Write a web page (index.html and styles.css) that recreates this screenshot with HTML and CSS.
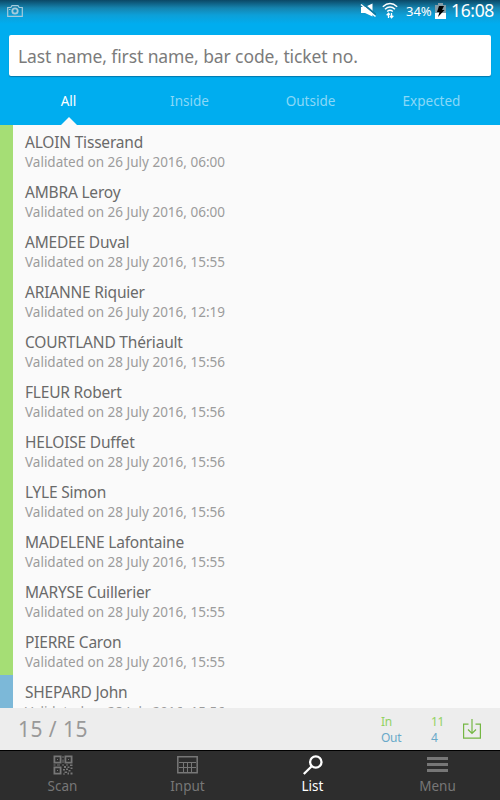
FILE: index.html
```html
<!DOCTYPE html>
<html lang="en">
<head>
  <meta charset="UTF-8">
  <title>Guest list</title>
  <link rel="stylesheet" href="styles.css">
</head>
<body>
  <header class="header">
    <div class="status-bar">
      <svg class="camera" width="16" height="12" viewBox="0 0 16 12" fill="none" stroke="#a5cbdc">
        <path stroke-width="1.200" d="M.7 2.500h3.100L5 .7h6l1.200 1.800h3.100v8.800H.7z"/>
        <circle cx="8" cy="6" r="2.700" stroke-width="1.800"/>
        <path d="M2 4.500h1.500"/>
      </svg>
      <svg class="mute" width="16" height="15" viewBox="0 0 16 15" fill="none">
        <path fill="#fff" d="M1 4h4l7.500-3.500v13L5 10H1z"/>
        <path stroke="#10789f" stroke-width="2" d="M2 0l14 11.800"/>
        <path stroke="#fff" stroke-width="1.500" d="M1 1.500l14.500 12"/>
      </svg>
      <svg class="wifi" width="16" height="17" viewBox="0 0 16 17" fill="none" stroke="#fff" stroke-width="1.500">
        <path d="M.8 4.700q7.200-6.500 14.400 0M3 7.200q5-4.500 10 0M5.200 9.500q2.800-2.500 5.600 0"/>
        <path stroke-width="1.300" d="M6.500 16v-4.500M4.700 13.300l1.800-2 1.300 1.500M9.500 11v4.500M8 13.800l1.500 1.900 1.800-2"/>
      </svg>
      <span class="percent">34%</span>
      <svg class="battery" width="11" height="16" viewBox="0 0 11 16">
        <path fill="#829ca8" d="M3 0h5v2h3v9H0V2h3z"/>
        <path fill="#fff" d="M0 10h11v6H0z"/>
        <path fill="#000" d="M4 3h5L7 7h2.500L3 14l1.500-5H2z"/>
      </svg>
      <span class="clock">16:08</span>
    </div>
    <input class="search" type="text" placeholder="Last name, first name, bar code, ticket no.">
    <div class="tabs">
      <div class="tab active"><span>All</span></div>
      <div class="tab"><span>Inside</span></div>
      <div class="tab"><span>Outside</span></div>
      <div class="tab"><span>Expected</span></div>
    </div>
  </header>

  <div class="list">
    <div class="guest in"><div class="name">ALOIN Tisserand</div><div class="info">Validated on 26 July 2016, 06:00</div></div>
    <div class="guest in"><div class="name">AMBRA Leroy</div><div class="info">Validated on 26 July 2016, 06:00</div></div>
    <div class="guest in"><div class="name">AMEDEE Duval</div><div class="info">Validated on 28 July 2016, 15:55</div></div>
    <div class="guest in"><div class="name">ARIANNE Riquier</div><div class="info">Validated on 26 July 2016, 12:19</div></div>
    <div class="guest in"><div class="name">COURTLAND Thériault</div><div class="info">Validated on 28 July 2016, 15:56</div></div>
    <div class="guest in"><div class="name">FLEUR Robert</div><div class="info">Validated on 28 July 2016, 15:56</div></div>
    <div class="guest in"><div class="name">HELOISE Duffet</div><div class="info">Validated on 28 July 2016, 15:56</div></div>
    <div class="guest in"><div class="name">LYLE Simon</div><div class="info">Validated on 28 July 2016, 15:56</div></div>
    <div class="guest in"><div class="name">MADELENE Lafontaine</div><div class="info">Validated on 28 July 2016, 15:55</div></div>
    <div class="guest in"><div class="name">MARYSE Cuillerier</div><div class="info">Validated on 28 July 2016, 15:55</div></div>
    <div class="guest in"><div class="name">PIERRE Caron</div><div class="info">Validated on 28 July 2016, 15:55</div></div>
    <div class="guest out"><div class="name">SHEPARD John</div><div class="info">Validated on 28 July 2016, 15:56</div></div>
  </div>

  <div class="summary">
    <div class="total">15 / 15</div>
    <div class="counts">
      <span class="count-in">In</span><span class="count-in">11</span>
      <span class="count-out">Out</span><span class="count-out">4</span>
    </div>
    <svg class="download" width="18" height="20" viewBox="0 0 18 20" fill="none" stroke="#74b743" stroke-width="1.200">
      <path d="M5.500 5.200H.6v14h16.800v-14h-4.900M9 0v14M5 10.500l4 4 4-4"/>
    </svg>
  </div>

  <nav class="nav">
    <div class="nav-item">
      <svg width="20" height="20" viewBox="0 0 20 20" fill="none" stroke="#777" stroke-width="1.800">
        <path d="M1.400 1.400h6.200v6.200H1.400zM12.400 1.400h6.200v6.200h-6.200zM1.400 12.400h6.200v6.200H1.400z"/>
        <path fill="#777" stroke="none" d="M4 4h1v1H4zM15 4h1v1h-1zM4 15h1v1H4zM9.500 1h1v2h-1zM9.500 4.500h1V8h-1zM.5 9.500h2v1h-2zM4 9.500h3v1H4zM9 9.500h2v1H9zM13 9.500h2v1h-2zM17 9.500h2.500v1.500H17zM11 11h2v2h-2zM14.500 11.500h2v1.500h-2zM17.500 12.500h2V14h-2zM10 14h2v1.500h-2zM13 13.500h2V15h-2zM15.500 15h2v1.500h-2zM11.500 16.500h2.500V18h-2.500zM14.500 17.500h1.500v2h-1.500zM10 18.500h2v1h-2zM17.500 17.500h2v2h-2z"/>
      </svg>
      <span>Scan</span>
    </div>
    <div class="nav-item">
      <svg width="21" height="20" viewBox="0 0 21 20" fill="none" stroke="#777">
        <path stroke-width="1.500" d="M.8 1.800h19.400v15.900H.8z"/>
        <path d="M2 7.500h17M2 12.500h17M6.500 7.500v10M10.500 7.500v10M14.500 7.500v10"/>
      </svg>
      <span>Input</span>
    </div>
    <div class="nav-item active">
      <svg width="20" height="20" viewBox="0 0 20 20" fill="none" stroke="#fff" stroke-width="2.300">
        <circle cx="12.800" cy="7" r="5.700"/>
        <path d="M8.700 11.300L.8 19"/>
      </svg>
      <span>List</span>
    </div>
    <div class="nav-item">
      <svg width="21" height="20" viewBox="0 0 21 20" fill="#777">
        <path d="M0 2h21v3H0zM0 8h21v3H0zM0 14h21v3H0z"/>
      </svg>
      <span>Menu</span>
    </div>
  </nav>
</body>
</html>
```

FILE: styles.css
```css
* {
  box-sizing: border-box;
}
body {
  margin: 0;
  height: 800px;
  display: flex;
  flex-direction: column;
  font-family: "Noto Sans", sans-serif;
  background: #fafafa;
  overflow: hidden;
}
.header {
  flex: none;
  height: 125px;
  background: linear-gradient(#0b4866 0, #1584af 8px, #0d9fd8 15px, #00adef 24px);
}
.status-bar {
  display: flex;
  height: 35px;
  padding: 0 5px 0 7px;
  color: #fff;
}
.camera {
  margin: 5px auto 0 0;
}
.mute {
  margin: 3px 6px 0 0;
}
.wifi {
  margin: 2px 8px 0 0;
}
.percent {
  width: 29px;
  font-size: 13px;
  line-height: 23px;
  white-space: nowrap;
}
.battery {
  margin: 3px 5px 0 0;
}
.clock {
  width: 44px;
  font-size: 17.500px;
  line-height: 20px;
  letter-spacing: -0.350px;
  white-space: nowrap;
}
.search {
  display: block;
  width: 482px;
  height: 41px;
  margin: 0 9px;
  padding: 0 9px;
  border: none;
  border-radius: 2px;
  background: #fff;
  box-shadow: 0 1px 1px rgba(0, 70, 110, 0.5);
  font-family: inherit;
  font-size: 17.500px;
  letter-spacing: -0.100px;
}
.search::placeholder {
  color: #7b7b7b;
}
.tabs {
  display: flex;
  height: 49px;
  padding: 0 8px;
}
.tab {
  flex: 1;
  display: flex;
  flex-direction: column;
  align-items: center;
  justify-content: space-between;
  padding-top: 15px;
  font-size: 13.500px;
  line-height: 20px;
  color: #8ad8f7;
}
.tab.active {
  color: #fff;
}
.tab.active::after {
  content: "";
  border: 8px solid transparent;
  border-top: none;
  border-bottom-color: #fafafa;
}
.list {
  flex: 1;
  min-height: 0;
  overflow: hidden;
}
.guest {
  height: 50px;
  padding: 7px 0 0 12px;
  border-left: 13px solid;
  line-height: 20px;
}
.guest.in {
  border-color: #a5de75;
}
.guest.out {
  border-color: #7cb8d8;
}
.name {
  font-size: 15.500px;
  letter-spacing: -0.200px;
  color: #6a6a6a;
}
.info {
  font-size: 13.500px;
  color: #9c9c9c;
}
.summary {
  flex: none;
  display: flex;
  align-items: center;
  height: 42px;
  padding: 0 19px 0 18px;
  background: #ededed;
}
.total {
  margin-right: auto;
  font-size: 21px;
  letter-spacing: 0.450px;
  color: #999;
}
.counts {
  display: grid;
  grid-template-columns: 50px 32px;
  padding-top: 2px;
  font-size: 12px;
  line-height: 16px;
  letter-spacing: -0.300px;
}
.count-in {
  color: #92d262;
}
.count-out {
  color: #69a9c9;
}
.nav {
  flex: none;
  display: flex;
  height: 50px;
  background: #2d2d2d;
  border-top: 1px solid #000;
}
.nav-item {
  flex: 1;
  display: flex;
  flex-direction: column;
  align-items: center;
  padding-top: 4px;
  font-size: 13.500px;
  line-height: 22px;
  color: #777;
}
.nav-item.active {
  color: #fff;
}
```
